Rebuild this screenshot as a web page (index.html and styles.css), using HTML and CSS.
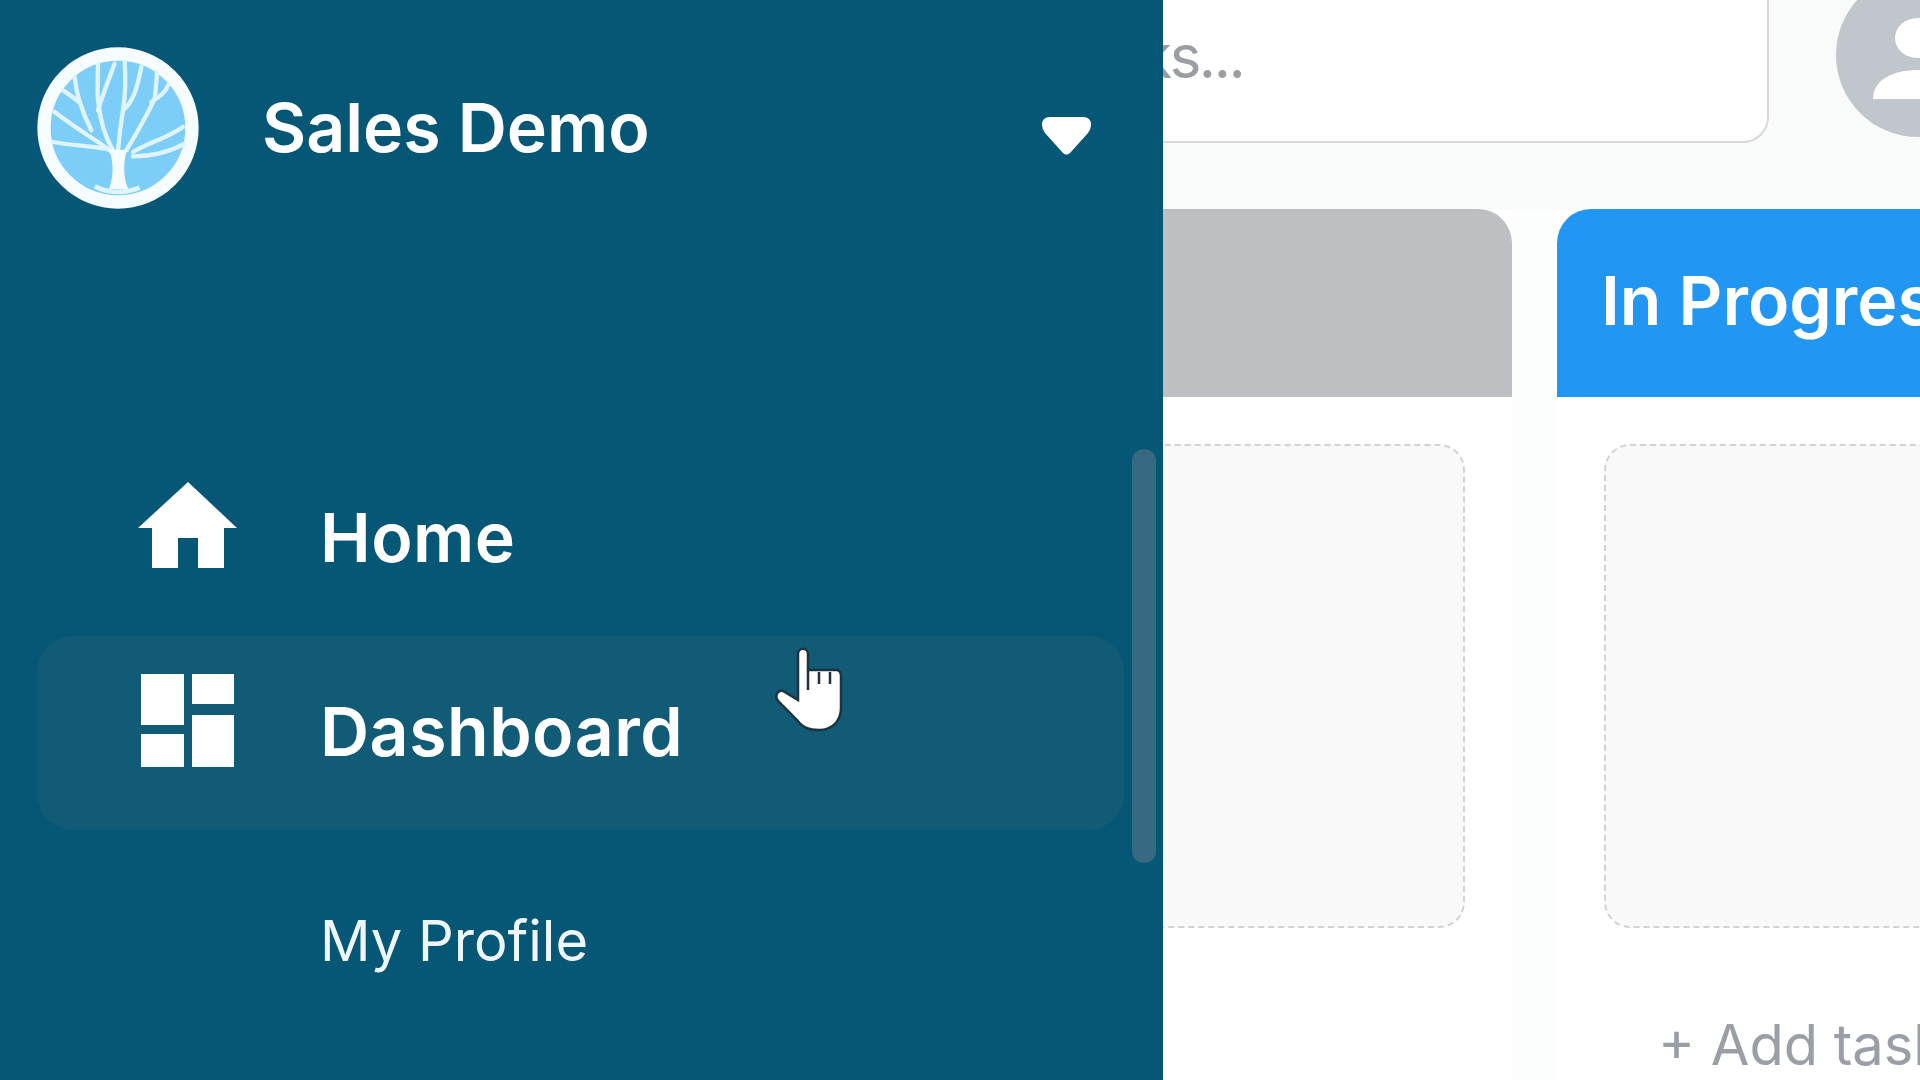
FILE: index.html
```html
<!DOCTYPE html>
<html>
  <head>
    <meta charset="utf-8">
    <title>Sales Demo</title>
    <link rel="stylesheet" href="styles.css">
  </head>
  <body>
    <div class="page">
      <main class="main">
        <div class="topbar">
          <div class="search">Search tasks...</div>
          <div class="avatar">
            <svg class="avatar__icon" viewBox="0 0 164 164">
              <ellipse cx="82" cy="65" rx="23" ry="20"/>
              <path d="M37 126C37 105 60 97 82 97S127 105 127 126Z"/>
            </svg>
          </div>
        </div>
        <div class="board">
          <section class="column">
            <div class="column__head column__head--grey"></div>
            <div class="column__drop"></div>
          </section>
          <section class="column">
            <div class="column__head column__head--blue">In Progress</div>
            <div class="column__drop"></div>
            <div class="column__add">+ Add task</div>
          </section>
        </div>
      </main>

      <aside class="drawer">
        <header class="drawer__top">
          <svg class="logo" viewBox="52 50 486 486">
            <circle cx="295" cy="293" r="222" fill="#7ccdf8" stroke="#f6fbfe" stroke-width="40"/>
            <g fill="none" stroke="#dff4fd" stroke-width="13" stroke-linecap="round">
              <path d="M285 372C250 340 190 310 105 245"/>
              <path d="M262 356C200 345 150 345 100 335"/>
              <path d="M280 360C250 310 240 260 235 210C232 170 235 130 235 100"/>
              <path d="M235 240C250 190 270 140 285 100"/>
              <path d="M295 360C300 300 305 270 310 240C318 190 318 140 315 95"/>
              <path d="M310 240C345 210 355 160 365 110"/>
              <path d="M320 360C350 310 380 260 405 205C410 170 410 150 412 125"/>
              <path d="M395 215C420 200 440 180 445 165"/>
              <path d="M340 365C390 335 440 325 490 290"/>
              <path d="M340 378C400 378 450 365 495 340"/>
              <path d="M215 300C190 250 170 200 165 140"/>
              <path d="M178 215C160 200 145 190 130 180"/>
            </g>
            <path d="M268 475C285 430 280 390 268 358L322 358C310 400 310 440 327 478Z" fill="#f6fbfe"/>
            <path d="M225 468Q290 500 360 472" fill="none" stroke="#dff4fd" stroke-width="14"/>
          </svg>
          <span class="drawer__title">Sales Demo</span>
          <svg class="drawer__caret" viewBox="0 0 49 38">
            <path d="M8 0H41Q49 0 49 8Q49 12 46 16L28 36Q24.500 39 21 36L3 16Q0 12 0 8Q0 0 8 0Z"/>
          </svg>
        </header>
        <nav class="nav">
          <a class="nav__item">
            <svg class="nav__icon" viewBox="0 0 99 86">
              <path d="M50 0L99 46H86V86H60V56H40V86H14V46H0Z"/>
            </svg>
            <span>Home</span>
          </a>
          <a class="nav__item nav__item--active">
            <svg class="nav__icon" viewBox="0 0 93 93">
              <path d="M0 0H43V51H0ZM51 0H93V30H51ZM51 41H93V93H51ZM0 60H43V93H0Z"/>
            </svg>
            <span>Dashboard</span>
          </a>
          <a class="nav__sub">My Profile</a>
        </nav>
        <div class="drawer__thumb"></div>
      </aside>

      <svg class="cursor" viewBox="-2 -2 71 88">
        <path d="M23 6C23-1 33-1 33 6V22H62Q66 23 66 28V60C66 72 58 82 44 82C34 82 28 80 22 72L3 53C-1 47 3 42 8 43L23 52Z" fill="#fff" stroke="#1d3342" stroke-width="2.500"/>
        <path d="M33 22V42M44 24V36M55 24V36" fill="none" stroke="#1d3342" stroke-width="2.500"/>
      </svg>
    </div>
  </body>
</html>
```

FILE: styles.css
```css
html,
body {
  margin: 0;
  height: 100%;
}
body {
  font-family: Inter, "Liberation Sans", sans-serif;
  background: #f9fafa;
}
/* the whole capture is a soft upscale */
.page {
  position: relative;
  width: 1920px;
  height: 1080px;
  overflow: hidden;
  filter: blur(0.7px);
}

/* board behind the drawer */
.main {
  padding-left: 772px;
  width: 1560px;
}
.topbar {
  display: flex;
  gap: 67px;
  align-items: flex-start;
}
.search {
  box-sizing: border-box;
  flex: 0 0 997px;
  height: 143px;
  padding: 20px 0 0 89px;
  background: #fff;
  border: 2px solid #d6d8dc;
  border-top: none;
  border-radius: 0 0 26px 26px;
  color: #9a9ea3;
  font-size: 60px;
  letter-spacing: -2.5px;
  line-height: 72px;
}
.avatar {
  flex: none;
  width: 164px;
  height: 164px;
  margin-top: -27px;
  border-radius: 50%;
  background: #c0c6cb;
}
.avatar__icon {
  display: block;
  fill: #fff;
}
.board {
  display: flex;
  gap: 45px;
  margin-top: 66px;
  background: #fcfdfd;
}
.column {
  flex: 0 0 740px;
  height: 871px;
  background: #fff;
}
.column__head {
  box-sizing: border-box;
  height: 188px;
  padding: 41px 44px 0;
  border-radius: 34px 34px 0 0;
  color: #fff;
  font-size: 68px;
  font-weight: 600;
  line-height: 100px;
  white-space: nowrap;
}
.column__head--grey {
  background: #bcc0c2;
}
.column__head--blue {
  background: #2196f3;
}
.column__drop {
  box-sizing: border-box;
  height: 484px;
  margin: 47px 47px 0;
  background: #f9f9f9;
  border: 2px dashed #d2d2d2;
  border-radius: 26px;
}
.column__add {
  margin-top: 80px;
  padding-left: 101px;
  color: #9a9ea6;
  font-size: 56px;
  line-height: 74px;
  white-space: nowrap;
}

/* drawer lies over the board */
.drawer {
  position: absolute;
  top: 0;
  left: 0;
  width: 1163px;
  height: 1080px;
  background: #065775;
  color: #fff;
}
.drawer__top {
  display: flex;
  align-items: center;
  height: 161px;
  padding: 47px 72px 0 37px;
}
.logo {
  flex: none;
  width: 162px;
  height: 162px;
}
.drawer__title {
  flex: 1;
  margin: -2px 0 0 63px;
  font-size: 68px;
  font-weight: 600;
  line-height: 1;
}
.drawer__caret {
  flex: none;
  width: 49px;
  height: 38px;
  margin-top: 16px;
  fill: #fff;
}
.drawer__thumb {
  position: absolute;
  top: 449px;
  left: 1132px;
  width: 24px;
  height: 414px;
  border-radius: 12px;
  background: #366a80;
}
.nav {
  margin: 234px 39px 0 37px;
}
.nav__item {
  display: flex;
  align-items: center;
  height: 194px;
  padding-left: 101px;
  border-radius: 36px;
  font-size: 68px;
  font-weight: 600;
}
.nav__item span {
  margin: -5px 0 0 83px;
  letter-spacing: 0.5px;
}
.nav__item--active {
  background: #125b77;
}
.nav__icon {
  flex: none;
  width: 99px;
  height: 86px;
  margin-bottom: 28px;
  fill: #fff;
}
.nav__item--active .nav__icon {
  width: 93px;
  height: 93px;
  margin: 0 3px 26px;
}
.nav__sub {
  display: block;
  margin-top: 76px;
  padding-left: 283px;
  color: #eef6fa;
  font-size: 56px;
  line-height: 70px;
}

.cursor {
  position: absolute;
  top: 646px;
  left: 773px;
  width: 71px;
  height: 88px;
}
```
